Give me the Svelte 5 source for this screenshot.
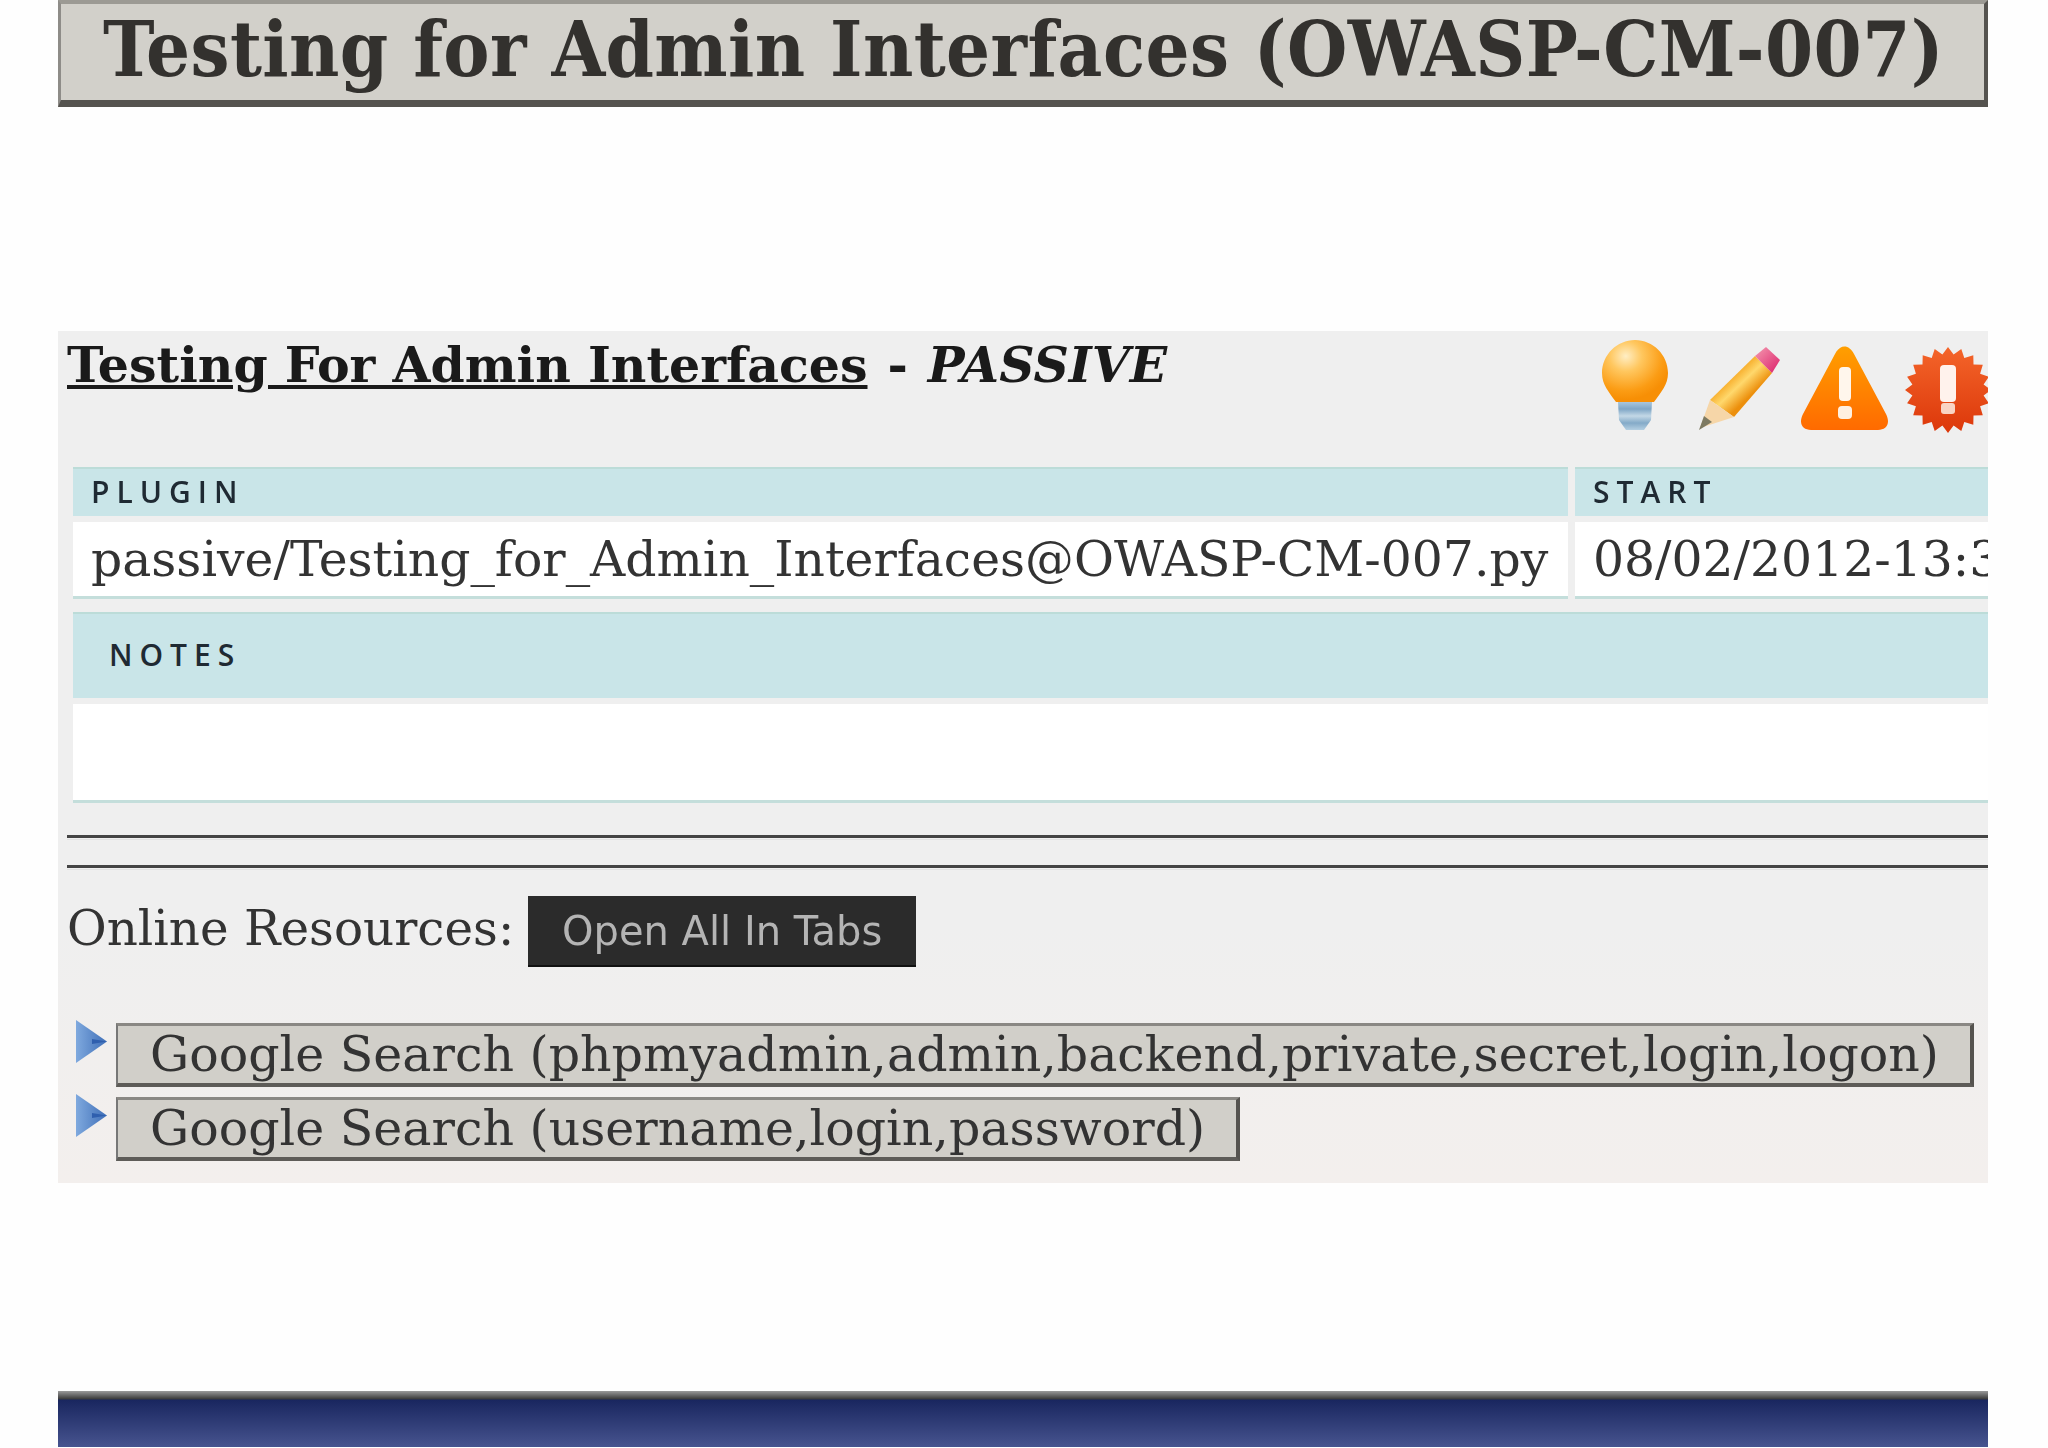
<script>
  const links = [
    'Google Search (phpmyadmin,admin,backend,private,secret,login,logon)',
    'Google Search (username,login,password)'
  ];

  // points of the red burst icon
  const burst = [];
  for (let i = 0; i < 40; i++) {
    const r = i % 2 ? 36 : 43;
    const a = (i / 40) * Math.PI * 2;
    burst.push(`${(43 + r * Math.sin(a)).toFixed(1)},${(43 - r * Math.cos(a)).toFixed(1)}`);
  }
</script>

<div class="page">
  <h1 class="title">Testing for Admin Interfaces (OWASP-CM-007)</h1>

  <section class="panel">
    <div class="panel-head">
      <h2><u>Testing For Admin Interfaces</u><span class="sep">-</span><em>PASSIVE</em></h2>
      <div class="icons">
        <svg class="bulb" width="66" height="90" viewBox="0 0 66 90">
          <defs>
            <radialGradient id="bulbGlass" cx="0.36" cy="0.26" r="0.7">
              <stop offset="0" stop-color="#ffeec4" />
              <stop offset="0.35" stop-color="#ffc75f" />
              <stop offset="0.8" stop-color="#fb9c14" />
              <stop offset="1" stop-color="#f78f05" />
            </radialGradient>
            <linearGradient id="bulbBase" x1="0" x2="0" y1="0" y2="1">
              <stop offset="0" stop-color="#a9c6dc" />
              <stop offset="0.25" stop-color="#7fa6c6" />
              <stop offset="0.5" stop-color="#c3d8e6" />
              <stop offset="0.75" stop-color="#84aac8" />
              <stop offset="1" stop-color="#b4cfe2" />
            </linearGradient>
          </defs>
          <path d="M33 0C51 0 66 15 66 33C66 45 59 52 52 62H14C7 52 0 45 0 33C0 15 15 0 33 0Z" fill="url(#bulbGlass)" />
          <path d="M16 62H50L49 80L42 90H24L17 80Z" fill="url(#bulbBase)" />
        </svg>
        <svg class="pencil" width="83" height="84" viewBox="0 0 83 84">
          <defs>
            <linearGradient id="pencilBody" gradientUnits="userSpaceOnUse" x1="33" y1="30" x2="52" y2="50">
              <stop offset="0" stop-color="#f6a823" />
              <stop offset="0.45" stop-color="#ffd86c" />
              <stop offset="1" stop-color="#ec8f0c" />
            </linearGradient>
            <linearGradient id="pencilEraser" x1="0" y1="0" x2="1" y2="1">
              <stop offset="0" stop-color="#f49ab0" />
              <stop offset="1" stop-color="#dc1f6a" />
            </linearGradient>
          </defs>
          <path d="M12 54L57 10L74 27L36 71Z" fill="url(#pencilBody)" />
          <path d="M57 10L68 1L82 14L74 27Z" fill="url(#pencilEraser)" />
          <path d="M12 54L36 71L2 82Z" fill="#f6d6a8" />
          <path d="M6 70L14 76L1 84Z" fill="#7d7a62" />
        </svg>
        <svg class="warning" width="89" height="84" viewBox="0 0 89 84">
          <defs>
            <linearGradient id="warnFill" x1="0" x2="0" y1="0" y2="1">
              <stop offset="0" stop-color="#ff9f00" />
              <stop offset="1" stop-color="#ff6a00" />
            </linearGradient>
          </defs>
          <path d="M35 8C40 -2 49 -2 54 8L86 68C91 78 86 84 78 84H11C3 84 -2 78 3 68Z" fill="url(#warnFill)" />
          <rect x="39" y="21" width="12" height="34" rx="4" fill="#fff6ec" />
          <rect x="38" y="60" width="14" height="13" rx="4" fill="#fff0e0" />
        </svg>
        <svg class="burst" width="83" height="87" viewBox="0 0 83 87">
          <defs>
            <linearGradient id="burstFill" x1="0" x2="0" y1="0" y2="1">
              <stop offset="0" stop-color="#f4652a" />
              <stop offset="1" stop-color="#dc370a" />
            </linearGradient>
          </defs>
          <polygon points={burst.join(' ')} fill="url(#burstFill)" />
          <rect x="35" y="18" width="16" height="37" rx="4" fill="#fff2ec" />
          <rect x="36" y="56" width="14" height="11" rx="3" fill="#f9d4c4" />
        </svg>
      </div>
    </div>

    <div class="table">
      <div class="th">PLUGIN</div>
      <div class="th">START</div>
      <div class="td">passive/Testing_for_Admin_Interfaces@OWASP-CM-007.py</div>
      <div class="td">08/02/2012-13:34:12</div>
      <div class="th notes">NOTES</div>
      <div class="td notes-body"></div>
    </div>

    <hr class="rule first" />
    <hr class="rule" />

    <div class="resources">
      <span class="resources-label">Online Resources:</span>
      <button class="open-all">Open All In Tabs</button>
    </div>

    <ul class="links">
      {#each links as link}
        <li>
          <svg width="31" height="43" viewBox="0 0 31 43">
            <defs>
              <linearGradient id="arrowFill" x1="0" x2="1" y1="0" y2="0">
                <stop offset="0" stop-color="#7fa9de" />
                <stop offset="1" stop-color="#3f6fb8" />
              </linearGradient>
            </defs>
            <path d="M0 0L31 21.5L0 43Z" fill="url(#arrowFill)" />
            <path d="M16 19L31 21.5L16 24Z" fill="#2f5fae" />
          </svg>
          <button class="link">{link}</button>
        </li>
      {/each}
    </ul>
  </section>

  <div class="footer"></div>
</div>

<style>
  :global(body) {
    background: #fefefe;
  }

  .page {
    width: 1930px;
    margin-left: 58px;
    font-family: "DejaVu Serif", serif;
    color: #333;
    filter: blur(0.6px);
  }

  .title {
    box-sizing: border-box;
    height: 107px;
    margin: 0 0 224px;
    padding-left: 42px;
    background: #d2d0ca;
    border-style: solid;
    border-width: 4px 4px 7px 3px;
    border-color: #9c9a94 #55534f #55534f #8e8c88;
    font-family: "DejaVu Serif Condensed", "DejaVu Serif", serif;
    font-size: 77px;
    line-height: 90px;
    font-weight: bold;
    letter-spacing: 0.4px;
    color: #33312e;
    white-space: nowrap;
    overflow: hidden;
  }

  .panel {
    box-sizing: border-box;
    height: 852px;
    background: linear-gradient(#efefef 70%, #f3efed);
    overflow: hidden;
  }

  .panel-head {
    display: flex;
    justify-content: space-between;
    height: 136px;
    padding-left: 9px;
  }

  h2 {
    margin: 0;
    padding-top: 6px;
    font-size: 49px;
    line-height: 56px;
    font-weight: bold;
    color: #1a1a1a;
    white-space: nowrap;
  }

  .sep {
    margin: 0 20px 0 20px;
  }

  .icons {
    display: flex;
    align-items: flex-start;
    flex: none;
    width: 386px;
    height: 110px;
    overflow: hidden;
  }

  .bulb {
    margin-top: 9px;
    flex: none;
  }

  .pencil {
    margin: 15px 0 0 30px;
    flex: none;
  }

  .warning {
    margin: 15px 0 0 19px;
    flex: none;
  }

  .burst {
    margin: 16px 0 0 16px;
    flex: none;
  }

  .table {
    display: grid;
    grid-template-columns: 1495px 1fr;
    column-gap: 7px;
    margin-left: 15px;
    overflow: hidden;
  }

  .th {
    box-sizing: border-box;
    height: 49px;
    padding-left: 18px;
    background: #c9e5e8;
    border-top: 2px solid #bcdcd8;
    font-family: "Open Sans", sans-serif;
    font-size: 30px;
    line-height: 45px;
    font-weight: 600;
    letter-spacing: 7px;
    color: #1f2a33;
  }

  .td {
    box-sizing: border-box;
    height: 77px;
    margin-top: 6px;
    padding-left: 18px;
    background: #fff;
    border-bottom: 3px solid #c4dedb;
    font-size: 48.8px;
    line-height: 76px;
    white-space: nowrap;
    overflow: hidden;
  }

  .th.notes {
    grid-column: 1 / -1;
    height: 86px;
    margin-top: 13px;
    padding-left: 36px;
    line-height: 82px;
  }

  .notes-body {
    grid-column: 1 / -1;
    height: 99px;
  }

  .rule {
    height: 1px;
    margin: 0 0 0 9px;
    border: 0;
    border-top: 3px solid #444;
    border-bottom: 1px solid #e2e2e2;
  }

  .rule.first {
    margin-top: 32px;
    margin-bottom: 25px;
  }

  .resources {
    display: flex;
    align-items: center;
    gap: 14px;
    margin: 26px 0 56px 9px;
  }

  .resources-label {
    padding-bottom: 8px;
    font-size: 48.4px;
    white-space: nowrap;
  }

  .open-all {
    box-sizing: border-box;
    width: 388px;
    height: 71px;
    padding: 0;
    border: 0;
    border-bottom: 2px solid #111;
    background: #2b2b2b;
    font-family: "DejaVu Sans", sans-serif;
    font-size: 40px;
    color: #b4b4b4;
  }

  .links {
    margin: 0;
    padding: 0 0 0 18px;
    list-style: none;
  }

  .links li {
    display: flex;
    align-items: flex-start;
    gap: 9px;
    height: 74px;
  }

  .links svg {
    flex: none;
    margin-top: -3px;
  }

  .link {
    box-sizing: border-box;
    height: 64px;
    padding: 0 31px 0 32px;
    background: #d1cfc9;
    border-style: solid;
    border-width: 3px 4px 4px 2px;
    border-color: #8a8884 #55534f #5e5c58 #777;
    font-family: "DejaVu Serif", serif;
    font-size: 49px;
    line-height: 52px;
    color: #333;
    white-space: nowrap;
  }

  .footer {
    height: 56px;
    margin-top: 208px;
    background: linear-gradient(#9a9a9a, #3a3a3a 8px, #19265f 9px, #47548f);
  }
</style>
